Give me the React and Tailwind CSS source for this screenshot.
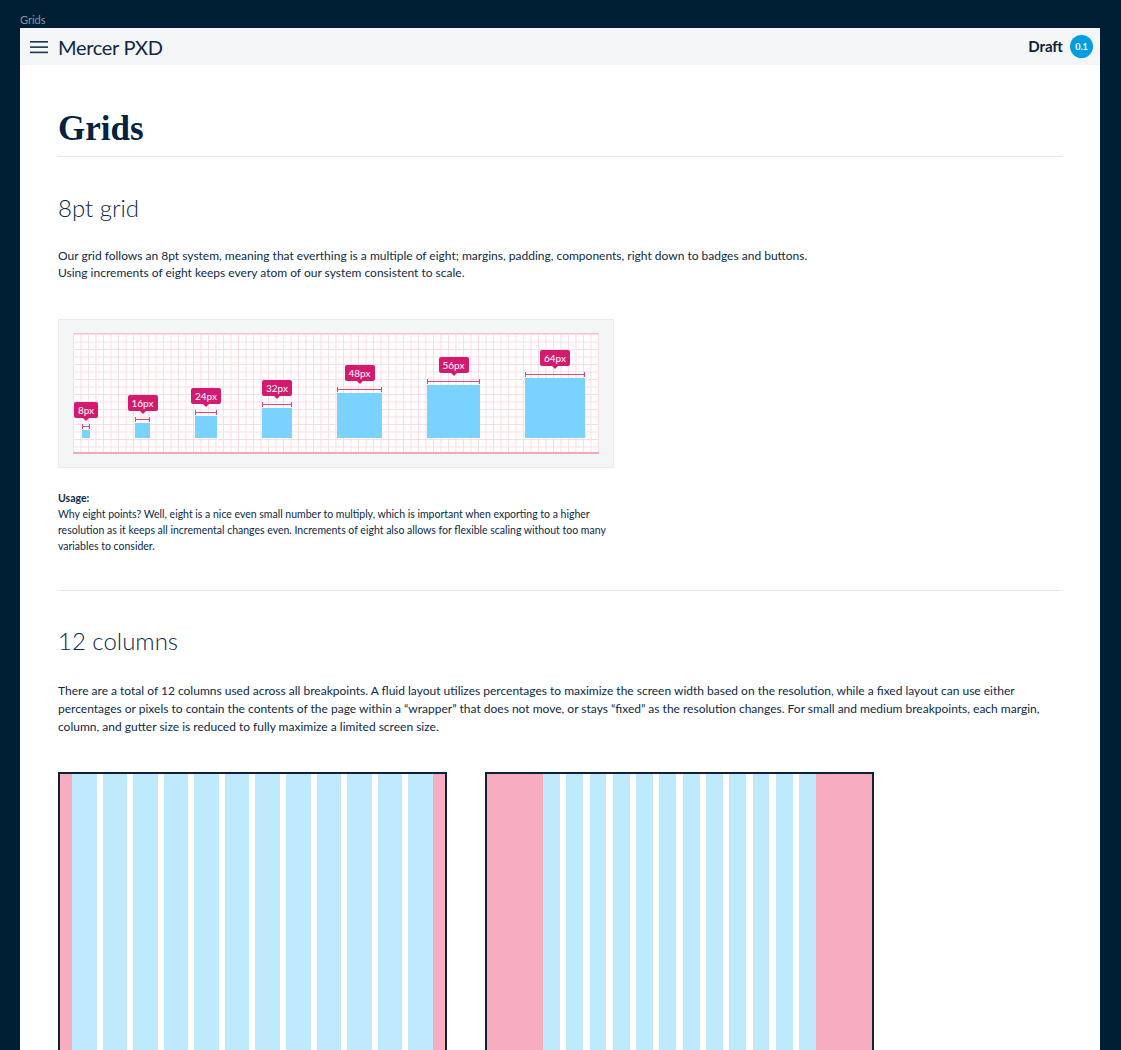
const sans = "font-['Lato','Noto_Sans',sans-serif]";

const squares = [
    { label: '8px', size: 8 },
    { label: '16px', size: 15 },
    { label: '24px', size: 22 },
    { label: '32px', size: 30 },
    { label: '48px', size: 45 },
    { label: '56px', size: 53 },
    { label: '64px', size: 60 },
];

function Square({ label, size }) {
    return (
        <div className="flex flex-col items-center" style={{ width: size }}>
            <div className="bg-[#d31a6f] text-white text-[10px] leading-[16px] px-[4px] rounded-[2px] whitespace-nowrap">
                {label}
            </div>
            <div className="w-0 h-0 border-x-[3px] border-x-transparent border-t-[3px] border-t-[#d31a6f]" />
            <div className="mt-[3px] h-[5px] w-full border-x border-[#d9468a] flex items-center">
                <div className="h-px w-full bg-[#d9468a]" />
            </div>
            <div className="mt-px w-full bg-[#79d2ff]" style={{ height: size }} />
        </div>
    );
}

function Columns({ margin, gap }) {
    return (
        <div className="w-[389px] h-[320px] border-2 border-[#0b2238] flex">
            <div className={`${margin} bg-[#f7adbf]`} />
            <div className={`flex-1 flex ${gap}`}>
                {Array.from({ length: 12 }).map((_, i) => (
                    <div key={i} className="flex-1 bg-[#bfe9fd]" />
                ))}
            </div>
            <div className={`${margin} bg-[#f7adbf]`} />
        </div>
    );
}

export default function App() {
    return (
        <div className={`min-h-screen bg-[#001f35] pt-[12px] ${sans}`}>
            <div className="ml-[20px] text-[11px] leading-[16px] text-[#8696a5]">Grids</div>

            <div className="ml-[20px] w-[1080px] bg-white min-h-[1100px]">
                {/* header */}
                <div className="h-[37px] bg-[#f4f5f7] flex items-center pl-[10px] pr-[7px]">
                    <svg width="18" height="14" viewBox="0 0 18 14" className="text-[#1b3550]">
                        <rect x="0" y="1" width="18" height="1.6" fill="currentColor" />
                        <rect x="0" y="6.3" width="18" height="1.6" fill="currentColor" />
                        <rect x="0" y="11.6" width="18" height="1.6" fill="currentColor" />
                    </svg>
                    <div className="ml-[10px] text-[20px] text-[#0b2a45] tracking-[-0.3px]">Mercer PXD</div>
                    <div className="ml-auto flex items-center gap-[7px]">
                        <span className="text-[15px] font-bold text-[#0b2238]">Draft</span>
                        <span className="w-[23px] h-[23px] rounded-full bg-[#009de0] text-white text-[9px] font-bold flex items-center justify-center">0.1</span>
                    </div>
                </div>

                <div className="px-[38px] text-[#0b2a45]">
                    <h1 className="pt-[42px] text-[35px] leading-[44px] font-bold font-['Liberation_Serif',serif] text-[#002340]">Grids</h1>
                    <div className="mt-[5px] border-b border-[#e6e8eb]" />

                    <h2 className="mt-[35px] text-[24px] leading-[32px] font-light">8pt grid</h2>
                    <p className="mt-[23px] text-[12px] leading-[17px]">
                        Our grid follows an 8pt system, meaning that everthing is a multiple of eight; margins, padding, components, right down to badges and buttons.
                        <br />
                        Using increments of eight keeps every atom of our system consistent to scale.
                    </p>

                    <div className="mt-[38px] w-[556px] h-[149px] bg-[#f4f5f7] border border-[#e8eaed] px-[14px] pt-[13px]">
                        <div className="h-[121px] bg-white bg-[linear-gradient(to_right,#fcdbe1_1px,transparent_1px),linear-gradient(to_bottom,#fcdbe1_1px,transparent_1px)] bg-[size:7.5px_7.5px] border-t border-[#f6c3cd] border-b-2 border-b-[#f3a7b7] flex items-end pl-[9px] gap-[45px] pb-[14px]">
                            {squares.map(s => (
                                <Square key={s.label} label={s.label} size={s.size} />
                            ))}
                        </div>
                    </div>

                    <div className="mt-[22px] w-[560px] text-[10.5px] leading-[16px]">
                        <div className="font-bold">Usage:</div>
                        <p>
                            Why eight points? Well, eight is a nice even small number to multiply, which is important when exporting to a higher resolution as it keeps all incremental changes even. Increments of eight also allows for flexible scaling without too many variables to consider.
                        </p>
                    </div>

                    <div className="mt-[36px] border-b border-[#e6e8eb]" />

                    <h2 className="mt-[34px] text-[24px] leading-[32px] font-light">12 columns</h2>
                    <p className="mt-[25px] text-[12px] leading-[18px]">
                        There are a total of 12 columns used across all breakpoints. A fluid layout utilizes percentages to maximize the screen width based on the resolution, while a fixed layout can use either percentages or pixels to contain the contents of the page within a “wrapper” that does not move, or stays “fixed” as the resolution changes. For small and medium breakpoints, each margin, column, and gutter size is reduced to fully maximize a limited screen size.
                    </p>

                    <div className="mt-[36px] flex gap-[38px]">
                        <Columns margin="w-[12px]" gap="gap-[6px]" />
                        <Columns margin="w-[56px]" gap="gap-[6.5px]" />
                    </div>
                </div>
            </div>
        </div>
    );
}
